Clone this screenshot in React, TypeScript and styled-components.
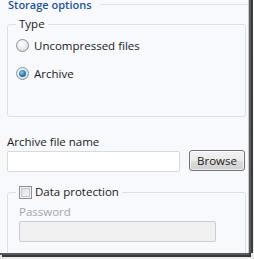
import React from 'react'
import styled, { createGlobalStyle } from 'styled-components'

const GlobalStyle = createGlobalStyle`
  html, body {
    margin: 0;
    padding: 0;
    background: #ffffff;
  }
  body {
    font-family: 'Open Sans', 'Noto Sans', sans-serif;
    font-size: 11.5px;
    color: #1a1a1a;
  }
`

const App = () => {
  return (
    <>
      <GlobalStyle />
      <Screen>
        <Window>
          <TitleRow>
            <Title>Storage options</Title>
            <Rule />
          </TitleRow>

          <Group>
            <Legend>Type</Legend>
            <Choice>
              <Radio />
              <span>Uncompressed files</span>
            </Choice>
            <Choice $gap={10}>
              <Radio $checked />
              <span>Archive</span>
            </Choice>
          </Group>

          <FieldLabel>Archive file name</FieldLabel>
          <FileRow>
            <TextBox />
            <Button>Browse</Button>
          </FileRow>

          <Group $inset $spaced>
            <Legend $inset>
              <CheckLabel>
                <Checkbox />
                <span>Data protection</span>
              </CheckLabel>
            </Legend>
            <FieldLabel $disabled $tight>Password</FieldLabel>
            <TextBox $disabled $width={197} />
          </Group>
        </Window>
      </Screen>
    </>
  )
}

export default App

const Screen = styled.div`
  width: 254px;
  height: 259px;
  overflow: hidden;
  background: linear-gradient(#ffffff, #e9e9e9);
`

const Window = styled.div`
  width: 241px;
  height: 253px;
  padding-left: 7px;
  overflow: hidden;
  background: #f7f9fc;
  border-right: 1px solid #c8ccd2;
  box-shadow: 2px 0 0 #5a5a5a, 4px 0 0 #3c3c3c, 0 2px 0 #5a5a5a, 2px 4px 0 #383838;
`

const TitleRow = styled.div`
  display: flex;
  align-items: center;
  height: 16px;
  margin-top: -4px;
  margin-right: -1px;
`

const Title = styled.span`
  margin-left: 1px;
  padding-right: 8px;
  font-size: 11px;
  font-weight: 600;
  line-height: 16px;
  position: relative;
  top: 1px;
  color: #1f54a0;
  white-space: nowrap;
`

const Rule = styled.div`
  flex: 1;
  height: 1px;
  background: #dde4ec;
`

const Group = styled.fieldset<{ $inset?: boolean; $spaced?: boolean }>`
  margin: ${(p) => (p.$spaced ? '12px' : '4px')} 0 0 0;
  width: 239px;
  box-sizing: border-box;
  padding: 0 0 ${(p) => (p.$spaced ? '40px' : '34px')} ${(p) => (p.$inset ? '11px' : '8px')};
  border: 1px solid #d9e0e8;
  border-radius: 3px;
  min-width: 0;
`

const Legend = styled.legend<{ $inset?: boolean }>`
  padding: 0 3px;
  margin-left: ${(p) => (p.$inset ? '-3px' : '0')};
  height: 16px;
  line-height: 16px;
  color: #1a1a1a;
`

const Choice = styled.label<{ $gap?: number }>`
  display: flex;
  align-items: center;
  gap: 5px;
  height: 18px;
  margin-top: ${(p) => (p.$gap ?? 4)}px;
`

const Radio = styled.span<{ $checked?: boolean }>`
  position: relative;
  width: 11px;
  height: 11px;
  border-radius: 50%;
  border: 1px solid #8a8f96;
  background: radial-gradient(circle at 40% 35%, #ffffff 0%, #e4e6e9 60%, #c9ccd0 100%);
  flex: none;

  &::after {
    content: '';
    display: ${(p) => (p.$checked ? 'block' : 'none')};
    position: absolute;
    left: 2px;
    top: 2px;
    width: 7px;
    height: 7px;
    border-radius: 50%;
    background: radial-gradient(circle at 40% 35%, #8fd0f2 0%, #2a89c4 45%, #0d4f80 100%);
  }
`

const FieldLabel = styled.div<{ $disabled?: boolean; $tight?: boolean }>`
  height: 18px;
  line-height: 18px;
  margin-top: ${(p) => (p.$tight ? '3px' : '16px')};
  color: ${(p) => (p.$disabled ? '#a3a7ac' : '#1a1a1a')};
`

const FileRow = styled.div`
  display: flex;
  align-items: flex-start;
  gap: 9px;
`

const TextBox = styled.div<{ $disabled?: boolean; $width?: number }>`
  width: ${(p) => p.$width ?? 173}px;
  height: 21px;
  box-sizing: border-box;
  border: 1px solid ${(p) => (p.$disabled ? '#c9ccd0' : '#d6dae0')};
  border-radius: 2px;
  background: ${(p) => (p.$disabled ? '#f0f0f0' : '#ffffff')};
`

const Button = styled.button`
  width: 56px;
  height: 21px;
  margin-top: -1px;
  padding: 0 0 1px;
  font-family: inherit;
  font-size: 11.5px;
  color: #1a1a1a;
  border: 1px solid #707070;
  border-radius: 3px;
  background: linear-gradient(#f2f2f2 0%, #ebebeb 50%, #dddddd 51%, #cfcfcf 100%);
  box-shadow: inset 0 0 0 1px rgba(255, 255, 255, 0.7);
`

const CheckLabel = styled.span`
  display: flex;
  align-items: center;
  gap: 3px;
`

const Checkbox = styled.span`
  width: 11px;
  height: 11px;
  border: 1px solid #8a8f96;
  background: linear-gradient(135deg, #dcdfe3, #f6f7f8);
  box-shadow: inset 0 0 0 1px #f4f5f6, inset 0 0 0 2px #c4c8cd;
  flex: none;
`
